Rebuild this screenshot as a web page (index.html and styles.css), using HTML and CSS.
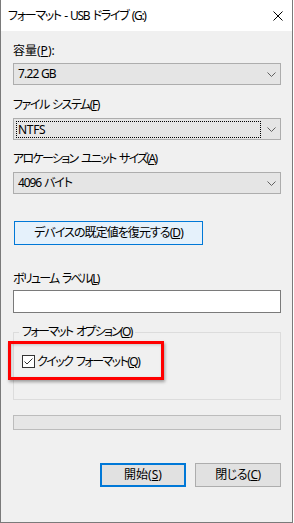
FILE: index.html
```html
<!DOCTYPE html>
<html lang="ja">
<head>
<meta charset="utf-8">
<title>フォーマット - USB ドライブ (G:)</title>
<link rel="stylesheet" href="styles.css">
</head>
<body>
<div class="window">
  <div class="titlebar">
    <span class="title">フォーマット - USB ドライブ (G:)</span>
    <span class="close"><svg width="10" height="10" viewBox="0 0 10 10"><path d="M0.5 0.5 L9.5 9.5 M9.5 0.5 L0.5 9.5" stroke="#000" stroke-width="1" fill="none"/></svg></span>
  </div>
  <div class="content">
    <div class="label l1">容量(<u>P</u>):</div>
    <div class="combo c1"><span class="val">7.22 GB</span><svg class="chev" width="9" height="5" viewBox="0 0 9 5"><path d="M0.5 0.5 L4.5 4.5 L8.5 0.5" stroke="#606060" stroke-width="1" fill="none"/></svg></div>

    <div class="label l2">ファイル システム(<u>F</u>)</div>
    <div class="combo c2 focused"><span class="val">NTFS</span><svg class="chev" width="9" height="5" viewBox="0 0 9 5"><path d="M0.5 0.5 L4.5 4.5 L8.5 0.5" stroke="#606060" stroke-width="1" fill="none"/></svg></div>

    <div class="label l3">アロケーション ユニット サイズ(<u>A</u>)</div>
    <div class="combo c3"><span class="val">4096 バイト</span><svg class="chev" width="9" height="5" viewBox="0 0 9 5"><path d="M0.5 0.5 L4.5 4.5 L8.5 0.5" stroke="#606060" stroke-width="1" fill="none"/></svg></div>

    <div class="restore">デバイスの既定値を復元する(<u>D</u>)</div>

    <div class="label l4">ボリューム ラベル(<u>L</u>)</div>
    <div class="textbox"></div>

    <fieldset class="group">
      <legend>フォーマット オプション(<u>O</u>)</legend>
      <div class="check-row">
        <span class="checkbox"><svg width="11" height="11" viewBox="0 0 11 11"><path d="M1.5 5.5 L4 8 L9.5 2.5" stroke="#333" stroke-width="1" fill="none"/></svg></span>
        <span class="check-label">クイック フォーマット(<u>Q</u>)</span>
      </div>
    </fieldset>

    <div class="progress"></div>

    <div class="buttons">
      <div class="btn default">開始(<u>S</u>)</div>
      <div class="btn">閉じる(<u>C</u>)</div>
    </div>
  </div>
  <div class="highlight"></div>
</div>
</body>
</html>
```

FILE: styles.css
```css
html, body {
  margin: 0;
  padding: 0;
  background: #ffffff;
}

body {
  font-family: "Noto Sans", "Noto Sans CJK JP", sans-serif;
  font-size: 12px;
  color: #000;
  font-feature-settings: "palt";
}

u {
  text-underline-offset: 1px;
}

.window {
  position: relative;
  box-sizing: border-box;
  width: 293px;
  height: 523px;
  background: #f0f0f0;
  border-left: 1px solid #7a7a7a;
  border-right: 1px solid #7a7a7a;
  border-bottom: 1px solid #7a7a7a;
}

.titlebar {
  height: 31px;
  background: #ffffff;
  display: flex;
  align-items: center;
  justify-content: space-between;
  padding-left: 7px;
}

.title {
  line-height: 16px;
  letter-spacing: -1.3px;
  word-spacing: 1.5px;
  white-space: nowrap;
}

.close {
  display: flex;
  margin-right: 9px;
}

.content {
  padding: 0 11px 0 12px;
  display: flex;
  flex-direction: column;
}

.label {
  height: 16px;
  line-height: 16px;
  white-space: nowrap;
}

.l1 { margin-top: 12px; }
.l2 { margin-top: 12px; letter-spacing: -1.45px; word-spacing: 1.5px; }
.l3 { margin-top: 11px; letter-spacing: -1.7px; word-spacing: 2px; }
.l4 { margin-top: 26px; letter-spacing: -1.75px; word-spacing: 2px; }

.combo {
  box-sizing: border-box;
  height: 22px;
  border: 1px solid #adadad;
  background: #e5e5e5;
  display: flex;
  align-items: center;
  justify-content: space-between;
  padding: 0 4px;
}

.c1 { margin-top: 4px; }
.c1 .val { letter-spacing: -0.8px; }
.c2 { margin-top: 5px; padding-left: 2px; }
.c2 .val { letter-spacing: -0.3px; }
.c3 { margin-top: 5px; }
.c3 .val { letter-spacing: -1.1px; word-spacing: 1px; }

.val {
  line-height: 16px;
  white-space: nowrap;
}

.focused .val {
  box-sizing: border-box;
  width: 245px;
  height: 17px;
  line-height: 15px;
  border: 1px dotted #000;
  padding-left: 1px;
}

.chev {
  display: block;
}

.restore {
  box-sizing: border-box;
  margin-top: 27px;
  margin-left: 1px;
  width: 189px;
  height: 24px;
  border: 1px solid #0078d7;
  background: #e5f1fb;
  display: flex;
  align-items: center;
  justify-content: center;
  line-height: 16px;
  letter-spacing: -0.95px;
  white-space: nowrap;
}

.textbox {
  box-sizing: border-box;
  margin-top: 3px;
  height: 23px;
  border: 1px solid #7a7a7a;
  background: #ffffff;
}

.group {
  margin: 11px 0 0 0;
  padding: 0 0 30px 5px;
  border: 1px solid #dcdcdc;
  min-inline-size: 0;
}

.group legend {
  padding: 0 3px;
  line-height: 16px;
  height: 16px;
  letter-spacing: -1.7px;
  word-spacing: 2px;
  white-space: nowrap;
}

.check-row {
  margin-top: 14px;
  margin-left: 3px;
  display: flex;
  align-items: center;
  height: 15px;
  gap: 2px;
}

.checkbox {
  box-sizing: border-box;
  width: 13px;
  height: 13px;
  border: 1px solid #333;
  background: #ffffff;
  display: flex;
}

.check-label {
  line-height: 15px;
  white-space: nowrap;
  letter-spacing: -1.55px;
  word-spacing: 2px;
}

.progress {
  box-sizing: border-box;
  margin-top: 15px;
  height: 15px;
  border: 1px solid #bcbcbc;
  background: #e6e6e6;
}

.buttons {
  margin-top: 33px;
  display: flex;
  justify-content: flex-end;
  gap: 9px;
}

.btn {
  box-sizing: border-box;
  width: 86px;
  height: 24px;
  border: 1px solid #adadad;
  background: #e1e1e1;
  display: flex;
  align-items: center;
  justify-content: center;
  line-height: 16px;
  letter-spacing: -0.4px;
}

.btn.default {
  border: 2px solid #0078d7;
  letter-spacing: 0;
}

.highlight {
  position: absolute;
  left: 7px;
  top: 341px;
  width: 156px;
  height: 39px;
  box-sizing: border-box;
  border: 3px solid #ff0000;
  box-shadow: 1px 2px 3px rgba(0, 0, 0, 0.35), inset 1px 1px 3px rgba(0, 0, 0, 0.18);
}
```
